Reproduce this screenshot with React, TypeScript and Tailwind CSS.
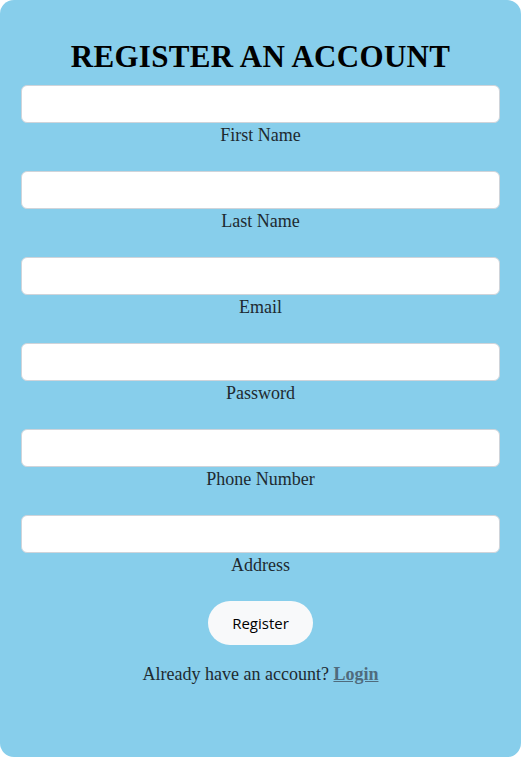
export default function App() {
  const fields = ["First Name", "Last Name", "Email", "Password", "Phone Number", "Address"];

  return (
    <div className="min-h-screen bg-white">
      <div
        className="h-[757px] bg-[#87ceeb] rounded-[14px] px-[21px] pt-[38px] flex flex-col items-center"
        style={{ fontFamily: '"Liberation Serif", "DejaVu Serif", serif' }}
      >
        <h1 className="text-[31px] leading-[38px] font-bold text-black tracking-[0.3px]">REGISTER AN ACCOUNT</h1>

        <form className="w-full mt-[9px] flex flex-col">
          {fields.map((f) => (
            <div key={f} className="flex flex-col items-center mb-[25px]">
              <input
                type="text"
                className="w-full h-[38px] bg-white border border-[#cfd4da] rounded-[6px]"
              />
              <label className="text-[18px] leading-[22px] text-[#1e2a30] mt-[1px]">{f}</label>
            </div>
          ))}

          <div className="flex justify-center mt-[0px]">
            <button
              type="button"
              className="w-[105px] h-[44px] rounded-full bg-[#f8f9fa] text-black text-[15px]"
              style={{ fontFamily: '"Open Sans", "Noto Sans", sans-serif' }}
            >
              Register
            </button>
          </div>
        </form>

        <p className="mt-[17px] text-[18px] leading-[24px] text-[#1e2a30]">
          Already have an account?{" "}
          <a href="#" className="font-bold underline text-[#4f6b7d]">Login</a>
        </p>
      </div>
    </div>
  );
}
